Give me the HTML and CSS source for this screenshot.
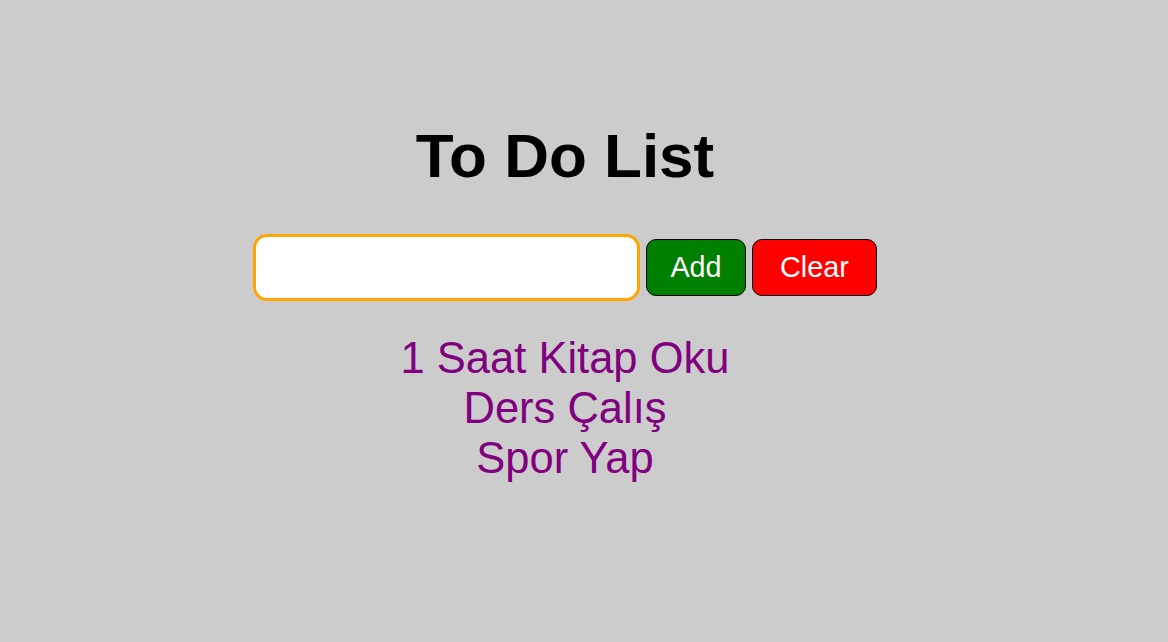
FILE: index.html
```html
<!DOCTYPE html>
<html lang="tr">
<head>
<meta charset="utf-8">
<title>To Do List</title>
<link rel="stylesheet" href="styles.css">
</head>
<body>
<main class="app">
  <h1 class="title">To Do List</h1>
  <div class="entry">
    <input class="task-input" type="text">
    <button class="btn btn-add">Add</button>
    <button class="btn btn-clear">Clear</button>
  </div>
  <ul class="tasks">
    <li>1 Saat Kitap Oku</li>
    <li>Ders Çalış</li>
    <li>Spor Yap</li>
  </ul>
</main>
</body>
</html>
```
FILE: styles.css
```css
html, body {
  margin: 0;
  padding: 0;
  background: #cccccc;
  font-family: "Liberation Sans", Arial, sans-serif;
}

.app {
  display: flex;
  flex-direction: column;
  align-items: center;
  padding: 120px 38px 0 0;
}

.title {
  margin: 0;
  font-size: 62px;
  font-weight: bold;
  line-height: 71px;
  color: #000;
}

.entry {
  display: flex;
  align-items: center;
  gap: 6px;
  margin-top: 43px;
}

.task-input {
  box-sizing: border-box;
  width: 387px;
  height: 67px;
  border: 3px solid #ffa500;
  border-radius: 14px;
  background: #fff;
  outline: none;
  font-size: 28px;
  padding: 0 12px;
}

.btn {
  box-sizing: border-box;
  height: 57px;
  border: 1px solid #000;
  border-radius: 10px;
  color: #fff;
  font-family: "Liberation Sans", Arial, sans-serif;
  font-size: 28.8px;
  padding: 0;
}

.btn-add {
  width: 100px;
  background: #008000;
}

.btn-clear {
  width: 125px;
  background: #ff0000;
}

.tasks {
  list-style: none;
  margin: 32px 0 0;
  padding: 0;
  text-align: center;
  color: #800080;
  font-size: 43.5px;
  line-height: 50px;
}
```
